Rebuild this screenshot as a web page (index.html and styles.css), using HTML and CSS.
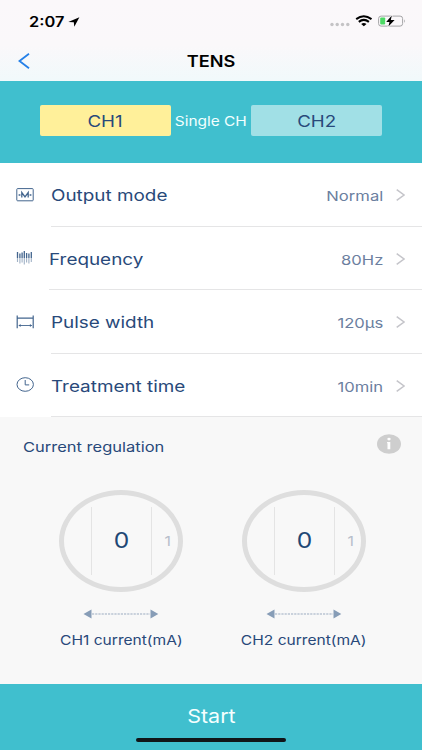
FILE: index.html
```html
<!DOCTYPE html>
<html lang="en">
<head>
<meta charset="utf-8">
<title>TENS</title>
<link rel="stylesheet" href="styles.css">
</head>
<body>
<div class="app">
  <header class="top">
    <div class="status">
      <span class="t time">2:07</span>
      <svg class="loc" width="12" height="10" viewBox="0 0 12 10"><path d="M.3 5 11.4.2 6.3 9.7 5.8 5.2Z"/></svg>
      <svg class="sys" width="78" height="14" viewBox="0 0 78 14">
        <g fill="#c4c3c5"><circle cx="4" cy="10.5" r="1.7"/><circle cx="9.2" cy="10.5" r="1.7"/><circle cx="14.5" cy="10.5" r="1.7"/><circle cx="19.8" cy="10.5" r="1.7"/></g>
        <g transform="translate(1.2 .3)"><g fill="none" stroke="#000" stroke-width="2"><path d="M27 4.8Q34.5-.8 42.3 4.8"/><path d="M29.6 7.6Q34.6 3.6 39.7 7.6"/></g>
        <path d="M32 9.6Q34.6 7.6 37.3 9.6L34.6 12Z"/></g>
        <rect x="50.6" y="2.1" width="24" height="10" rx="2.5" fill="none" stroke="#a4a4a6"/>
        <path d="M76.2 5.3Q78 7.1 76.2 8.9Z" fill="#a4a4a6"/>
        <rect x="52.2" y="3.6" width="5" height="7" rx="1" fill="#4cd964"/>
        <path d="M63.8 1.6 58.2 7.9H61.5L60.4 12.5 66.6 6.1H62.8Z" stroke="#fbf8fa" stroke-width="1.4" paint-order="stroke"/>
      </svg>
    </div>
    <div class="nav">
      <svg class="back" width="12" height="16" viewBox="0 0 12 16"><path d="M11 .8 1.5 8 11 15.2"/></svg>
      <h1 class="t title">TENS</h1>
    </div>
  </header>

  <section class="channels">
    <div class="ch ch-on"><span class="t">CH1</span></div>
    <div class="single"><span class="t">Single CH</span></div>
    <div class="ch"><span class="t">CH2</span></div>
  </section>

  <main class="list">
    <div class="row">
      <svg class="icon" width="18" height="14" viewBox="0 0 18 14"><rect x=".8" y=".6" width="16.4" height="12.2" rx=".8"/><path d="M2.6 7H4.4M13.6 7H15.4M5.8 9.6V4.6L9 9 12.2 4.6V9.6" stroke-width="1.3"/></svg>
      <div class="cell"><span class="t label">Output mode</span><span class="t value">Normal</span><svg class="chev" width="9" height="12" viewBox="0 0 9 12"><path d="M.7.6 8 6 .7 11.4"/></svg></div>
    </div>
    <div class="row narrow">
      <svg class="icon" width="18" height="14" viewBox="0 0 18 14"><path d="M1.5 1V7M3.9 2.5V7M6.1 1.5V7M8.3 0V7M10.6 2V7M12.9 2.5V7M15.3 1V7" stroke-width="1.3"/><path d="M1.5 7V11M3.9 7V12.5M6.1 7V11.5M8.3 7V13.5M10.6 7V11.5M12.9 7V12.5M15.3 7V11" stroke-width="1.1" opacity=".5"/></svg>
      <div class="cell"><span class="t label">Frequency</span><span class="t value">80Hz</span><svg class="chev" width="9" height="12" viewBox="0 0 9 12"><path d="M.7.6 8 6 .7 11.4"/></svg></div>
    </div>
    <div class="row">
      <svg class="icon" width="18" height="14" viewBox="0 0 18 14"><path d="M1.2.5V13.2M17.2.5V13.2M1.2 3.1H17.2" stroke-width="1.2"/><path d="M2.8 10.5H15.8" stroke-width=".9"/><path d="M4.6 9 2.6 10.5 4.6 12ZM13.9 9 15.9 10.5 13.9 12Z" stroke="none" fill="#43658e"/></svg>
      <div class="cell"><span class="t label">Pulse width</span><span class="t value">120μs</span><svg class="chev" width="9" height="12" viewBox="0 0 9 12"><path d="M.7.6 8 6 .7 11.4"/></svg></div>
    </div>
    <div class="row">
      <svg class="icon clock" width="18" height="15" viewBox="0 0 18 15"><ellipse cx="9.2" cy="7.5" rx="8.2" ry="6.8"/><path d="M9.2 3V7.9H13.2"/></svg>
      <div class="cell"><span class="t label">Treatment time</span><span class="t value">10min</span><svg class="chev" width="9" height="12" viewBox="0 0 9 12"><path d="M.7.6 8 6 .7 11.4"/></svg></div>
    </div>
  </main>

  <section class="regulation">
    <div class="heading">
      <span class="t">Current regulation</span>
      <svg width="24" height="20" viewBox="0 0 24 20"><ellipse cx="12" cy="10" rx="12" ry="9.8" fill="#cecece"/><ellipse cx="12" cy="5.1" rx="1.7" ry="1.3" fill="#fff"/><path d="M10.1 8H13.3V15.3H10.5V9.2H10.1Z" fill="#fff"/></svg>
    </div>
    <div class="dials">
      <div class="dial">
        <div class="ring"><span></span><span class="mid"><b class="t">0</b></span><span class="next"><i class="t">1</i></span></div>
        <svg class="arrow" width="76" height="10" viewBox="0 0 76 10"><path d="M8.5 .4V9.6L.5 5ZM67.5 .4V9.6L75.3 5Z" fill="#879db7"/><path d="M9 5H67" stroke="#9babc0" stroke-dasharray="2.2 1"/></svg>
        <span class="t caption">CH1 current(mA)</span>
      </div>
      <div class="dial">
        <div class="ring"><span></span><span class="mid"><b class="t">0</b></span><span class="next"><i class="t">1</i></span></div>
        <svg class="arrow" width="76" height="10" viewBox="0 0 76 10"><path d="M8.5 .4V9.6L.5 5ZM67.5 .4V9.6L75.3 5Z" fill="#879db7"/><path d="M9 5H67" stroke="#9babc0" stroke-dasharray="2.2 1"/></svg>
        <span class="t caption">CH2 current(mA)</span>
      </div>
    </div>
  </section>

  <footer class="start"><span class="t">Start</span><div class="home"></div></footer>
</div>
</body>
</html>
```

FILE: styles.css
```css
* { box-sizing: border-box; }
body { margin: 0; font-family: Inter, "Liberation Sans", sans-serif; color: #28497a; }
svg { display: block; flex: none; }
.app { width: 422px; height: 750px; display: flex; flex-direction: column; background: #f8f8f8; overflow: hidden; }

/* Wide letterforms: text is stretched horizontally */
.t { display: inline-block; white-space: nowrap; line-height: 20px; font-weight: 400; font-style: normal; transform: scaleX(1.17); }

.top { height: 81px; flex: none; background: linear-gradient(#fbf8fa 0, #faf8fa 45px, #f1f9fb 81px); }
.status { height: 42px; display: flex; align-items: center; padding: 0 16px 0 29px; }
.time { width: 39px; margin-top: 2px; color: #000; font-size: 14px; font-weight: 600; transform-origin: left; }
.loc { margin-top: 1px; }
.sys { margin-left: auto; }
.nav { height: 39px; display: grid; grid-template-columns: 60px 1fr 60px; align-items: center; }
.back { margin: 0 0 2px 18px; fill: none; stroke: #2580e8; stroke-width: 1.8; }
.title { margin: 0; color: #000; font-size: 15.5px; font-weight: 600; text-align: center; }

.channels { height: 82px; flex: none; display: flex; align-items: center; padding: 0 40px 3px; background: #40bfce; }
.ch { width: 131px; height: 31px; display: flex; align-items: center; justify-content: center; border-radius: 2px; background: #a1e0e6; font-size: 16px; }
.ch-on { background: #fff09a; }
.single { flex: 1; display: flex; justify-content: center; color: #f3ffff; font-size: 13.2px; }

.list { height: 254px; flex: none; display: grid; grid-template-rows: repeat(4, 1fr); background: #fff; }
.row { display: grid; grid-template-columns: 51px 1fr; align-items: center; }
.narrow { grid-template-columns: 49px 1fr; }
.icon { margin-left: 16px; fill: none; stroke: #43658e; stroke-width: 1; }
.narrow .icon { margin-bottom: 1px; }
.clock { margin-bottom: 2px; }
.cell { height: 100%; display: flex; align-items: center; padding: 2px 17px 0 0; border-bottom: 1px solid #e5e5e6; }
.label { font-size: 16px; transform: scaleX(1.18); transform-origin: left; }
.value { margin: 2px 13px 0 auto; font-size: 13.5px; color: #6c7f9f; transform: scaleX(1.23); transform-origin: right; }
.chev { fill: none; stroke: #c5c5ca; stroke-width: 1.5; }

.regulation { flex: 1; }
.heading { height: 58px; display: flex; justify-content: space-between; align-items: center; padding: 0 21px 4px 23px; font-size: 13.7px; }
.heading .t { margin-top: 5px; transform: scaleX(1.205); transform-origin: left; }
.dials { display: flex; gap: 59px; padding: 15px 0 0 59px; }
.dial { width: 124px; display: flex; flex-direction: column; align-items: center; }
.ring { width: 124px; height: 102px; display: grid; grid-template-columns: 27px 61px 1fr; align-items: center; border: 5px solid #dedede; border-radius: 50%; }
.ring span { height: 68px; display: flex; align-items: center; justify-content: center; }
.mid { border: solid #e4e4e4; border-width: 0 1px; color: #214775; font-size: 21px; }
.next { padding-left: 6px; color: #b7becb; font-size: 13.5px; }
.arrow { margin-top: 17px; }
.caption { margin-top: 11px; font-size: 13.3px; }

.start { height: 66px; flex: none; display: flex; flex-direction: column; align-items: center; padding-top: 23px; background: #40bfce; color: #f5ffff; font-size: 19px; }
.start .t { transform: scaleX(1.13); }
.home { width: 150px; height: 4px; margin-top: 11px; border-radius: 2px; background: #101518; }
```
